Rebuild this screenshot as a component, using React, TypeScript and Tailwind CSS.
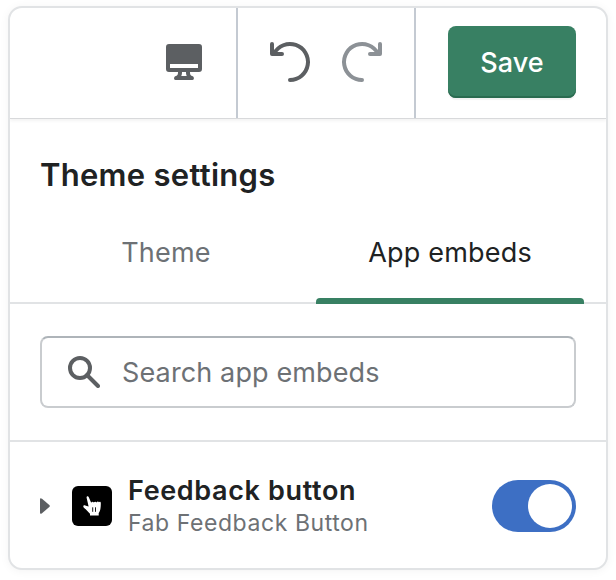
function MonitorIcon() {
  return (
    <svg className="h-9 w-9" viewBox="0 0 36 36" fill="#5c5f62">
      <path
        fillRule="evenodd"
        d="M3 0H33Q36 0 36 3V25Q36 28 33 28H24C24 30.500 24.500 31.700 26 32C28.500 32.500 28.500 36 26.500 36H9.500C7.500 36 7.500 32.500 10 32C11.500 31.700 12 30.500 12 28H3Q0 28 0 25V3Q0 0 3 0ZM4 20V24H32V20ZM16 28C16 29.800 15.800 31 15.200 32H20.800C20.200 31 20 29.800 20 28Z"
      />
    </svg>
  );
}

function UndoIcon() {
  return (
    <svg className="h-11 w-11" viewBox="0 0 44 44" fill="none" stroke="#5c5f62" strokeWidth="4" strokeLinecap="round" strokeLinejoin="round">
      <path d="M4 4V14H14M6.100 13.500A18 18 0 1 1 22 40" />
    </svg>
  );
}

function RedoIcon() {
  return (
    <svg className="h-11 w-11" viewBox="0 0 44 44" fill="none" stroke="#8c9196" strokeWidth="4" strokeLinecap="round" strokeLinejoin="round">
      <path d="M40 4V14H30M37.900 13.500A18 18 0 1 0 22 40" />
    </svg>
  );
}

function SearchIcon() {
  return (
    <svg className="h-8 w-8" viewBox="0 0 32 32" fill="none" stroke="#5c5f62" strokeWidth="4">
      <circle cx="12" cy="12" r="10" />
      <path d="M19 19L30 30" strokeLinecap="round" />
    </svg>
  );
}

function HandIcon() {
  return (
    <svg className="h-5 w-[18px]" viewBox="0 0 18 20">
      <path
        fill="#fff"
        d="M3.600 1.800C3.300 .2 5.200 -.2 5.800 1.200L8.200 6.800C8.700 5.600 10.200 5.600 10.800 6.600C11.400 5.500 13 5.400 13.600 6.400C14.300 5.200 15.500 5.400 15.900 6.300C16.500 5.400 17.800 5.700 17.800 7C17.800 11.500 17.500 14.500 15.700 17V19.500H7V17.800C5 16 3.300 13.500 1.200 12C-.4 10.800 .2 8.800 2.200 9.400L5.600 10.600Z"
      />
      <path d="M9.700 11.300V15.800M12.500 11.300V15.800" stroke="#000" strokeWidth=".9" />
    </svg>
  );
}

export default function App() {
  return (
    <div className="h-[580px] w-[616px] bg-white px-2 pt-1.5 font-['Inter',sans-serif] text-[#202223]">
      <main className="flex h-[564px] w-[600px] flex-col overflow-hidden rounded-[14px] border-2 border-[#e1e3e5] bg-white shadow-[0_1px_10px_rgba(0,0,0,0.05)]">
        <header className="flex h-[111px] shrink-0 border-b border-[#d8d9db] shadow-[0_2px_3px_rgba(0,0,0,0.05)]">
          <div className="flex w-[228px] items-center justify-end border-r-2 border-[#c4cad2] pr-[34px] pb-0.5">
            <MonitorIcon />
          </div>
          <div className="flex w-[178px] items-center justify-center gap-7 border-r-2 border-[#c4cad2] pb-0.5">
            <UndoIcon />
            <RedoIcon />
          </div>
          <div className="flex flex-1 justify-end pt-[18px] pr-[30px]">
            <button className="h-[72px] w-32 rounded-lg bg-[#388063] pt-px text-[27px] font-medium leading-[71px] tracking-[0.1px] text-white shadow-[inset_0_-2px_0_#2a6b50,0_2px_1px_rgba(0,0,0,0.05)]">
              Save
            </button>
          </div>
        </header>

        <h1 className="mt-9 ml-[30px] h-10 shrink-0 text-[31px] font-semibold leading-10 tracking-[0.28px]">Theme settings</h1>

        <nav className="mt-[25px] flex h-[84px] shrink-0 border-b-2 border-[#e1e3e5] px-[22px] text-[27px] leading-[66px]">
          <button className="h-[66px] w-[268px] tracking-[0.2px] text-[#6d7175]">Theme</button>
          <button className="ml-4 flex h-[84px] w-[268px] shrink-0 flex-col items-center justify-between">
            <span className="tracking-[0.2px]">App embeds</span>
            <span className="h-1.5 w-full rounded-t bg-[#388063]" />
          </button>
        </nav>

        <section className="h-[138px] shrink-0 border-b-2 border-[#e1e3e5] px-[30px] pt-8">
          <label className="flex h-[72px] w-[536px] items-center gap-[22px] rounded-lg border-2 border-[#c9cccf] border-t-[#aeb4b9] pl-[26px] text-[27px]">
            <SearchIcon />
            <span className="pt-0.5 leading-8 tracking-[0.13px] text-[#6d7175]">Search app embeds</span>
          </label>
        </section>

        <section className="flex flex-1 items-center px-[30px] pt-0.5">
          <svg className="h-4 w-2.5" viewBox="0 0 10 16">
            <path d="M0 1.500Q0 -.8 2 .8L9.300 7Q10.400 8 9.300 9L2 15.200Q0 16.800 0 14.500Z" fill="#5c5f62" />
          </svg>
          <div className="ml-[22px] flex h-10 w-10 items-center justify-center rounded-md bg-black">
            <HandIcon />
          </div>
          <div className="ml-4 flex flex-col whitespace-nowrap pt-0.5">
            <span className="text-[27px] font-semibold leading-8 tracking-[0.64px]">Feedback button</span>
            <span className="text-[23px] leading-8 tracking-[0.57px] text-[#6d7175]">Fab Feedback Button</span>
          </div>
          <button role="switch" aria-checked="true" className="ml-auto flex h-[52px] w-[84px] items-center justify-end rounded-full bg-[#3d6fc4] pr-1">
            <span className="h-11 w-11 rounded-full bg-white" />
          </button>
        </section>
      </main>
    </div>
  );
}
